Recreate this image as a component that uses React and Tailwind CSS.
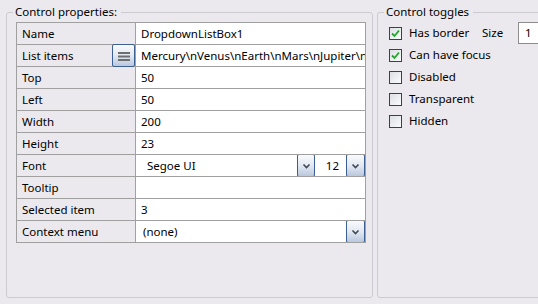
import React from 'react';

// Property grid rows for the selected control
const rows = [
  { label: 'Name', value: 'DropdownListBox1' },
  { label: 'List items', value: 'Mercury\\nVenus\\nEarth\\nMars\\nJupiter\\nSaturn', button: true },
  { label: 'Top', value: '50' },
  { label: 'Left', value: '50' },
  { label: 'Width', value: '200' },
  { label: 'Height', value: '23' },
  { label: 'Font', font: true },
  { label: 'Tooltip', value: '' },
  { label: 'Selected item', value: '3' },
  { label: 'Context menu', combo: '(none)' },
];

const toggles = [
  { label: 'Has border', checked: true },
  { label: 'Can have focus', checked: true },
  { label: 'Disabled', checked: false },
  { label: 'Transparent', checked: false },
  { label: 'Hidden', checked: false },
];

function BlueButton({ className, children }) {
  return (
    <div
      className={`flex items-center justify-center border border-[#3c5f94] rounded-[2px] bg-linear-to-b from-[#f8fafd] via-[#e3e9f2] to-[#b9c8de] ${className}`}
    >
      {children}
    </div>
  );
}

function Chevron() {
  return (
    <svg width="9" height="6" viewBox="0 0 9 6">
      <path d="M1.5 1.5 L4.5 4.5 L7.5 1.5" fill="none" stroke="#404652" strokeWidth="1.6" />
    </svg>
  );
}

function Checkbox({ checked }) {
  return (
    <div className="w-[13px] h-[13px] shrink-0 border border-[#1f4775] bg-linear-to-br from-[#dcdfe4] to-[#fbfbfc] flex items-center justify-center">
      {checked && (
        <svg width="9" height="9" viewBox="0 0 9 9">
          <path d="M1 4.5 L3.5 7 L8 1.5" fill="none" stroke="#21a52a" strokeWidth="1.8" />
        </svg>
      )}
    </div>
  );
}

export default function App() {
  return (
    <div className="w-[538px] h-[304px] bg-[#ebe9ed] overflow-hidden flex items-start font-['Noto_Sans',sans-serif] text-[11.5px] text-black leading-[16px]">
      {/* Control properties */}
      <fieldset className="ml-[6px] mt-[4px] w-[367px] h-[294px] shrink-0 border border-[#cdcbd1] rounded-[3px] p-0 m-0">
        <legend className="ml-[6px] pl-[2px] pr-[4px]">Control properties:</legend>
        <div className="pl-[9px] pt-[2px]">
          <div className="w-[350px] border-l border-t border-[#a0a0a0]">
            {rows.map((r) => (
              <div key={r.label} className="flex h-[22px] border-b border-[#a0a0a0]">
                <div className="w-[119px] shrink-0 border-r border-[#a0a0a0] flex items-center justify-between pl-[5px]">
                  <span className="whitespace-nowrap">{r.label}</span>
                  {r.button && (
                    <BlueButton className="w-[23px] h-[23px] -my-px">
                      <svg width="12" height="10" viewBox="0 0 12 10">
                        <rect x="0" y="1" width="12" height="2" fill="#6e6e6e" />
                        <rect x="0" y="4.5" width="12" height="2" fill="#6e6e6e" />
                        <rect x="0" y="8" width="12" height="2" fill="#6e6e6e" />
                      </svg>
                    </BlueButton>
                  )}
                </div>
                <div className="flex-1 min-w-0 bg-white border-r border-[#a0a0a0] flex items-center overflow-hidden">
                  {r.font ? (
                    <>
                      <span className="w-[161px] shrink-0 pl-[11px]">Segoe UI</span>
                      <BlueButton className="w-[18px] shrink-0 h-[23px] -my-px">
                        <Chevron />
                      </BlueButton>
                      <span className="w-[31px] shrink-0 text-right pr-[7px]">12</span>
                      <BlueButton className="w-[19px] shrink-0 h-[23px] -my-px">
                        <Chevron />
                      </BlueButton>
                    </>
                  ) : r.combo ? (
                    <>
                      <span className="pl-[7px] flex-1">{r.combo}</span>
                      <BlueButton className="w-[19px] shrink-0 h-[23px] -my-px">
                        <Chevron />
                      </BlueButton>
                    </>
                  ) : (
                    <span className="pl-[5px] whitespace-nowrap">{r.value}</span>
                  )}
                </div>
              </div>
            ))}
          </div>
        </div>
      </fieldset>

      {/* Control toggles */}
      <fieldset className="ml-[4px] mt-[4px] w-[200px] h-[294px] shrink-0 border border-[#cdcbd1] rounded-[3px] p-0 m-0">
        <legend className="ml-[6px] pl-[2px] pr-[4px]">Control toggles</legend>
        <div className="pl-[11px] pt-[2px] flex flex-col">
          {toggles.map((t, i) => (
            <div key={t.label} className="flex items-center h-[22px]">
              <Checkbox checked={t.checked} />
              <span className={`ml-[7px] whitespace-nowrap ${i === 0 ? 'w-[73px] shrink-0' : ''}`}>{t.label}</span>
              {i === 0 && (
                <>
                  <span className="w-[36px] shrink-0">Size</span>
                  <div className="w-[40px] shrink-0 h-[22px] bg-white border border-[#8c8c8c] flex items-center pl-[6px]">
                    1
                  </div>
                </>
              )}
            </div>
          ))}
        </div>
      </fieldset>
    </div>
  );
}
